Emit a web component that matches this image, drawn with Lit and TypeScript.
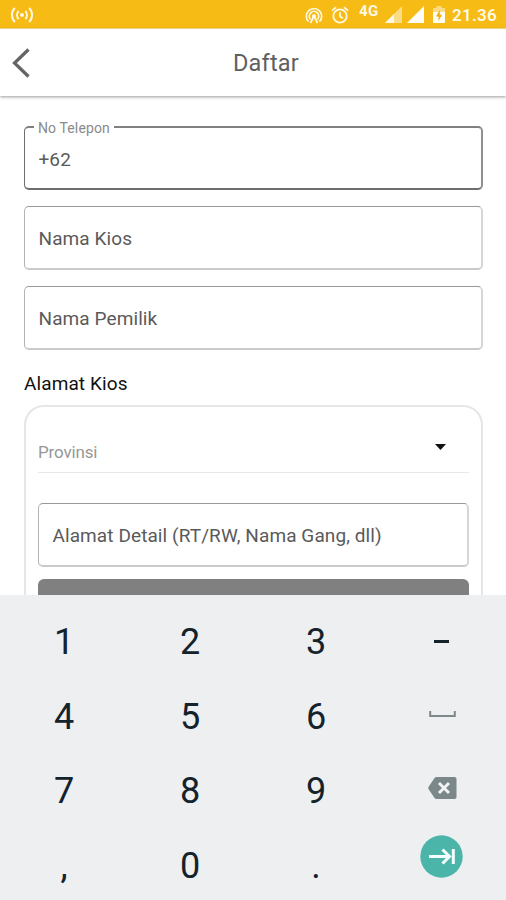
import { LitElement, html, css, svg } from "lit";
import { customElement, property } from "lit/decorators.js";

@customElement("status-bar")
export class StatusBar extends LitElement {
  static styles = css`
    :host {
      display: flex;
      height: 28px;
      flex: none;
      justify-content: space-between;
      background: #f6bb14;
      border-bottom: 1px solid #fcdf93;
      color: #fff8e4;
      font: 500 17px/28px Roboto, sans-serif;
    }
    svg { display: block; flex: none; }
    .cast { margin: 4px 0 0 10px; }
    .right { display: flex; align-items: flex-start; padding-right: 9px; }
    .hotspot { margin-top: 7px; }
    .alarm { margin: 6px 0 0 8px; }
    .net { width: 21px; margin: 0 0 0 10px; font-size: 15px; line-height: 23px; font-weight: 700; letter-spacing: 0.3px; }
    .signal { margin: 6px 0 0 5px; }
    .signal.full { margin-left: 5px; }
    .battery { margin: 6px 0 0 9px; }
    .time { margin-left: 7px; font-weight: 600; line-height: 31px; letter-spacing: 0.25px; width: 45px; }
  `;
  render() {
    return html`
      <svg class="cast" width="24" height="22" viewBox="0 0 24 22" fill="none" stroke="#fff8e4" stroke-width="2">
        <circle cx="12" cy="11" r="2" fill="#fff8e4" stroke="none" />
        <path d="M8.600 7a6 6 0 0 0 0 8M15.400 7a6 6 0 0 1 0 8M4.800 4a10 10 0 0 0 0 14M19.200 4a10 10 0 0 1 0 14" />
      </svg>
      <div class="right">
        <svg class="hotspot" width="18" height="18" viewBox="0 0 18 18" fill="none" stroke="#fff8e4" stroke-width="1.700">
          <path d="M3.600 14.700a7.700 7.700 0 1 1 10.800 0" />
          <path d="M5.600 12.400a4.700 4.700 0 1 1 6.800 0" />
          <path d="M5.500 16 9 9l3.500 7" />
          <circle cx="9" cy="9.300" r="1.300" fill="#fff8e4" />
        </svg>
        <svg class="alarm" width="18" height="18" viewBox="0 0 18 18" fill="none" stroke="#fff8e4" stroke-width="1.800">
          <circle cx="9" cy="10" r="6.700" />
          <path d="M1 4.600 5 1.300M17 4.600 13 1.300M9 6v4.500l3 1.800" />
        </svg>
        <span class="net">4G</span>
        <svg class="signal" width="17" height="17" viewBox="0 0 17 17">
          <path d="M0 17 17 0V17Z" fill="#fbdc86" />
          <path d="M0 17 9 8V17Z" fill="#fff8e4" />
        </svg>
        <svg class="signal full" width="17" height="17" viewBox="0 0 17 17">
          <path d="M0 17 17 0V17Z" fill="#fffdf6" />
        </svg>
        <svg class="battery" width="12" height="17" viewBox="0 0 12 17">
          <path d="M1 2h2.500V0h5v2H11a1 1 0 0 1 1 1v4H0V3a1 1 0 0 1 1-1Z" fill="#fbdc86" />
          <path d="M0 6h12v10a1 1 0 0 1-1 1H1a1 1 0 0 1-1-1Z" fill="#fffdf6" />
          <path d="M6.800 4 3 10.500h2.500V15L9 8.700H6.800Z" fill="#f0ae10" />
        </svg>
        <span class="time">21.36</span>
      </div>
    `;
  }
}

@customElement("outlined-field")
export class OutlinedField extends LitElement {
  @property() label = "";
  @property() value = "";
  static styles = css`
    :host { display: block; }
    .box {
      position: relative;
      box-sizing: border-box;
      height: 64px;
      border: 1px solid #b5b5b5;
      border-width: 1px 2px 2px 1px;
      border-color: #999 #d6d6d6 #cacaca #b4b4b4;
      border-radius: 5px;
      padding-left: 13.500px;
      color: #5a5a5a;
      font: 400 19px/63px Roboto, sans-serif;
      letter-spacing: 0.090px;
      white-space: nowrap;
    }
    .box.active {
      border-width: 2px 2px 2px 1px;
      border-color: #808080 #909090 #6e6e6e #6e6e6e;
    }
    .legend {
      position: absolute;
      left: 9px;
      top: -9px;
      padding: 0 4px;
      background: #fff;
      color: #8a8a8a;
      font-size: 14px;
      line-height: 18px;
      letter-spacing: 0.120px;
    }
  `;
  render() {
    return this.value
      ? html`<div class="box active"><span class="legend">${this.label}</span>${this.value}</div>`
      : html`<div class="box">${this.label}</div>`;
  }
}

const spaceIcon = svg`<path d="M1.200 0V5H25.800V0" fill="none" stroke="#7f898b" stroke-width="2" />`;

@customElement("number-pad")
export class NumberPad extends LitElement {
  static styles = css`
    :host {
      display: grid;
      flex: none;
      box-sizing: border-box;
      height: 305px;
      padding: 9px 1px 0;
      grid-template-columns: repeat(4, 1fr);
      grid-template-rows: repeat(4, 74.600px);
      overflow: hidden;
      background: #edeff1;
      color: #14222c;
      font: 400 36px/76px Roboto, sans-serif;
      text-align: center;
    }
    .key { display: flex; justify-content: center; align-items: center; }
    .minus::before { content: ""; width: 15px; height: 3px; background: #14222c; }
    .minus, .next { padding-right: 1px; }
    .space, .erase { padding-bottom: 4px; }
    .next { padding-bottom: 18px; }
    svg { display: block; }
  `;
  private key(k: string) {
    switch (k) {
      case "minus":
        return html`<div class="key minus"></div>`;
      case "space":
        return html`<div class="key space"><svg width="27" height="6" viewBox="0 0 27 6">${spaceIcon}</svg></div>`;
      case "erase":
        return html`<div class="key erase">
          <svg width="29" height="22" viewBox="0 0 29 22">
            <path d="M8.500 0H26.500A2 2 0 0 1 28.500 2V20A2 2 0 0 1 26.500 22H8.500Q7.300 22 6.500 21L.5 12Q0 11 .5 10L6.500 1Q7.300 0 8.500 0Z" fill="#7b8789" />
            <path d="M11 6 21 16M21 6 11 16" stroke="#f1f3f4" stroke-width="2.900" />
          </svg>
        </div>`;
      case "next":
        return html`<div class="key next">
          <svg width="43" height="43" viewBox="0 0 43 43" fill="none" stroke="#f4ffff" stroke-width="3">
            <circle cx="21.500" cy="21.500" r="21.200" fill="#4bb5a9" stroke="none" />
            <path d="M9 21.500H29M22.500 14.500 29.500 21.500 22.500 28.500M33.300 14V29" />
          </svg>
        </div>`;
      default:
        return html`<div>${k}</div>`;
    }
  }
  render() {
    const keys = ["1", "2", "3", "minus", "4", "5", "6", "space", "7", "8", "9", "erase", ",", "0", ".", "next"];
    return keys.map((k) => this.key(k));
  }
}

@customElement("app-root")
export class AppRoot extends LitElement {
  static styles = css`
    :host {
      display: flex;
      flex-direction: column;
      height: 900px;
      overflow: hidden;
      background: #fff;
      font-family: Roboto, sans-serif;
    }
    .bar {
      display: grid;
      grid-template-columns: 44px 1fr 18px;
      align-items: center;
      flex: none;
      height: 67px;
      box-shadow: 0 1px 3px rgba(0, 0, 0, 0.4);
    }
    .bar svg { display: block; margin-left: 11px; }
    .title {
      text-align: center;
      color: #606060;
      font-size: 23.500px;
      letter-spacing: 0.200px;
      line-height: 30px;
    }
    .form { flex: 1; min-height: 0; overflow: hidden; padding: 30px 23px 0 24px; }
    .fields { display: flex; flex-direction: column; gap: 16px; }
    .heading { margin-top: 21px; color: #111; font-size: 19px; line-height: 26px; letter-spacing: 0.100px; }
    .card {
      box-sizing: border-box;
      height: 260px;
      margin-top: 8px;
      padding: 0 12px;
      border: 2px solid #e6e6e6;
      border-radius: 20px;
    }
    .select {
      display: flex;
      justify-content: space-between;
      align-items: flex-start;
      height: 65px;
      margin-bottom: 30px;
      border-bottom: 1px solid #e8e8e8;
      color: #979797;
      font-size: 17px;
      letter-spacing: -0.150px;
    }
    .select span { padding-top: 34px; line-height: 22px; }
    .select svg { margin: 37px 23px 0 0; }
    .button { height: 60px; margin-top: 12px; border-radius: 6px; background: #808080; }
  `;
  render() {
    return html`
      <status-bar></status-bar>
      <header class="bar">
        <svg width="20" height="30" viewBox="0 0 20 30" fill="none" stroke="#646464" stroke-width="3.200">
          <path d="M17.500 1.500 3.500 15 17.500 28.500" />
        </svg>
        <div class="title">Daftar</div>
      </header>
      <main class="form">
        <div class="fields">
          <outlined-field label="No Telepon" value="+62"></outlined-field>
          <outlined-field label="Nama Kios"></outlined-field>
          <outlined-field label="Nama Pemilik"></outlined-field>
        </div>
        <div class="heading">Alamat Kios</div>
        <section class="card">
          <div class="select">
            <span>Provinsi</span>
            <svg width="11" height="6" viewBox="0 0 11 6"><path d="M0 0H11L5.500 6Z" fill="#111" /></svg>
          </div>
          <outlined-field label="Alamat Detail (RT/RW, Nama Gang, dll)"></outlined-field>
          <div class="button"></div>
        </section>
      </main>
      <number-pad></number-pad>
    `;
  }
}
